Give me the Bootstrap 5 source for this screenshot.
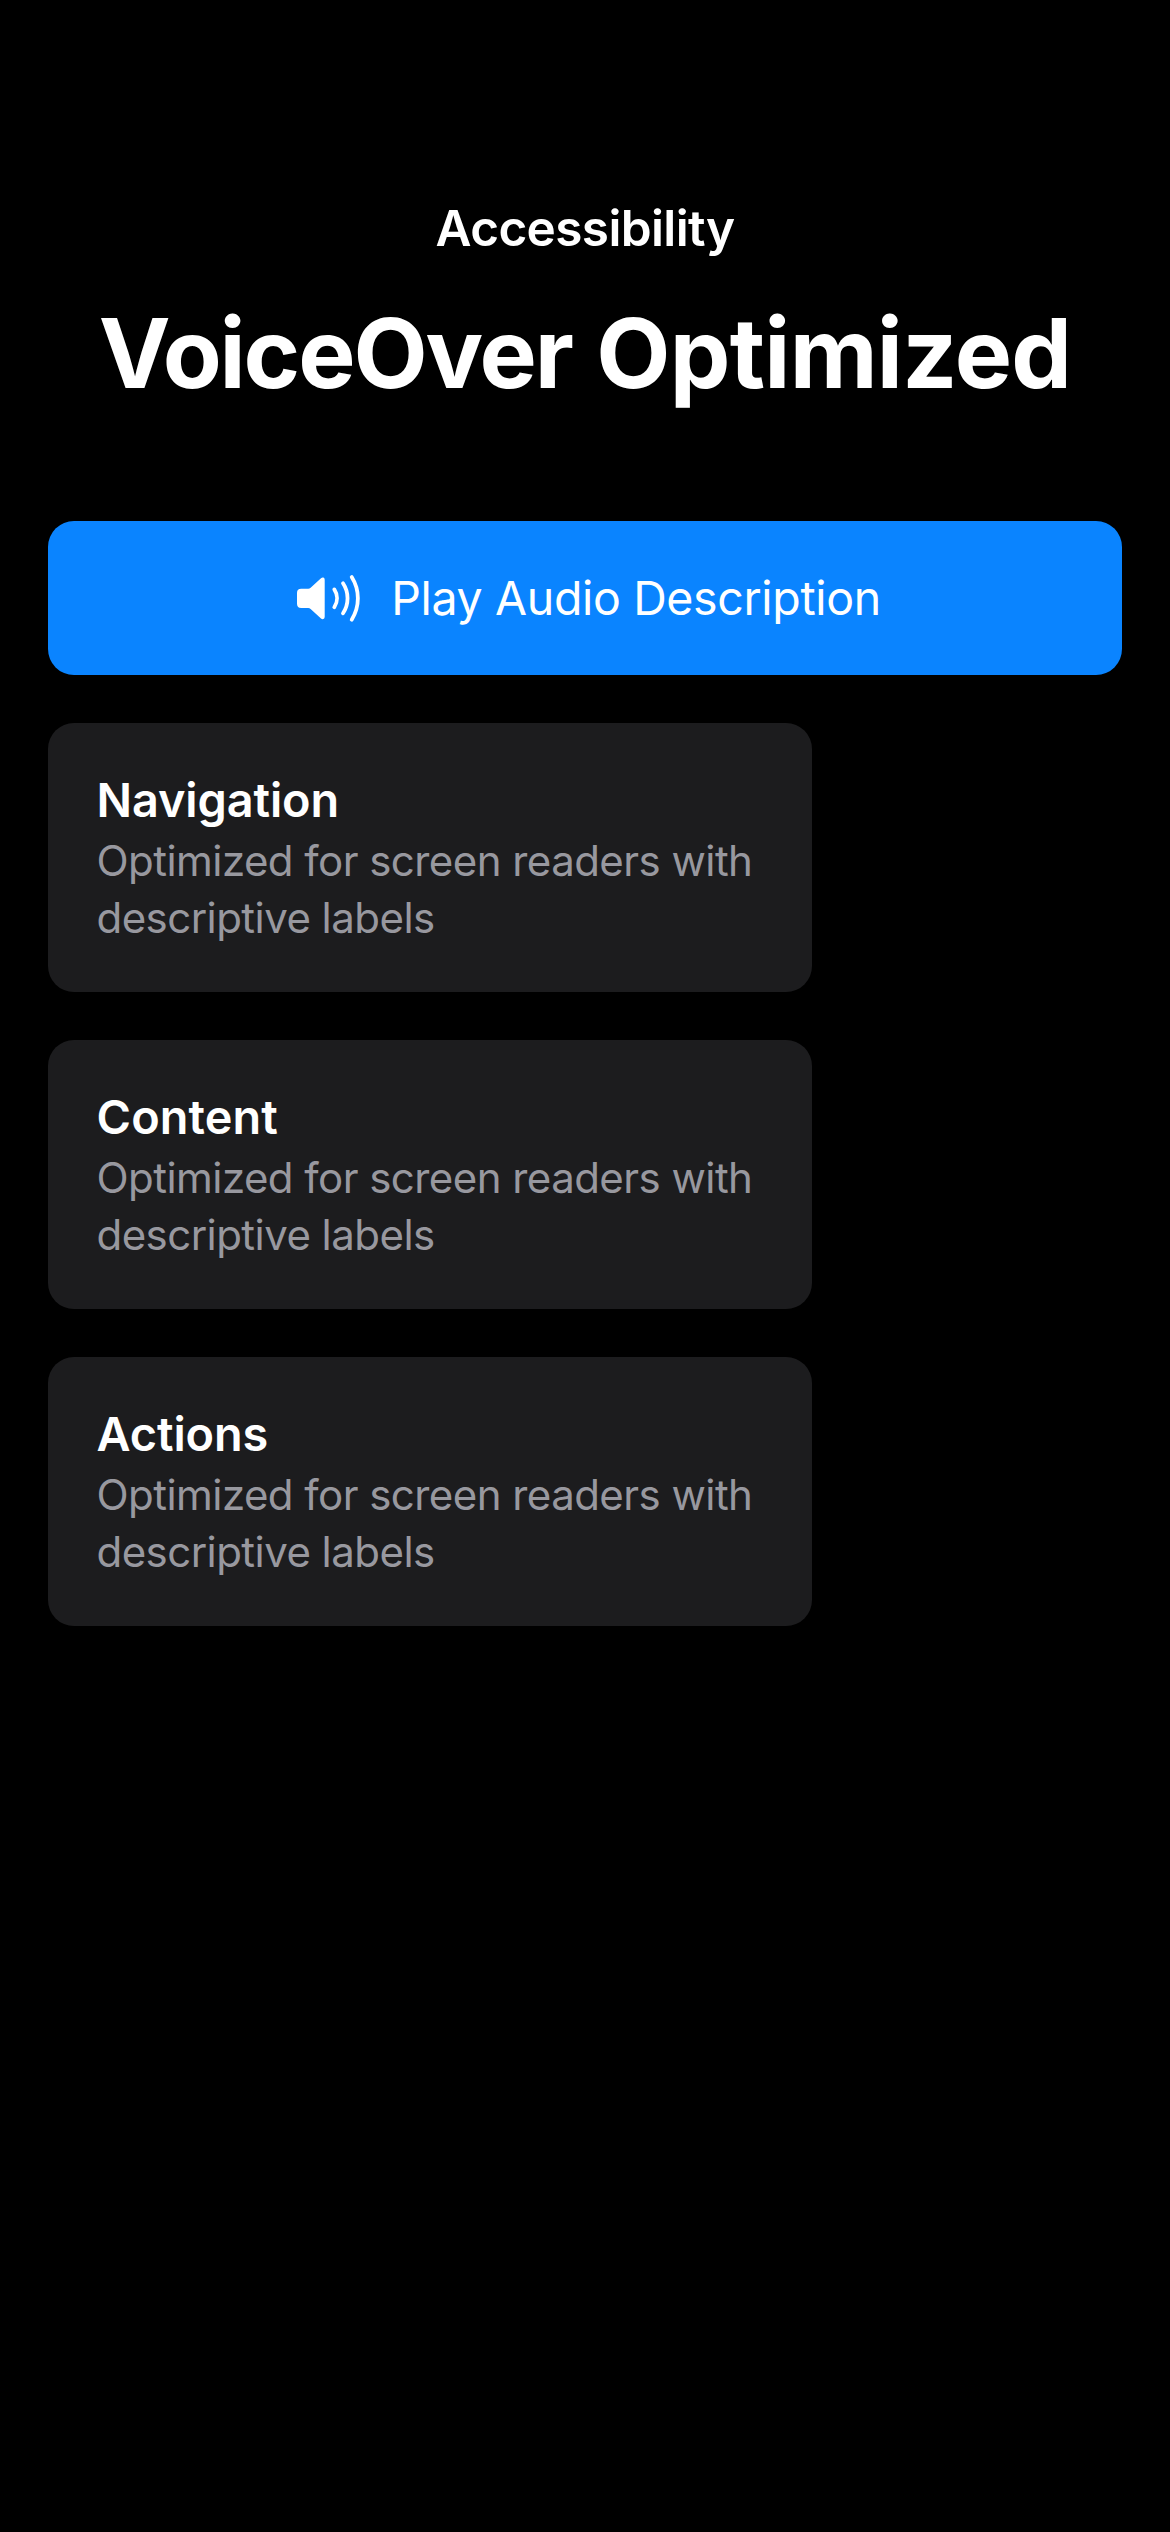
<!DOCTYPE html>
<html lang="en" data-bs-theme="dark">
<head>
<meta charset="utf-8">
<meta name="viewport" content="width=device-width, initial-scale=1">
<title>Accessibility</title>
<link href="https://cdn.jsdelivr.net/npm/bootstrap@5.3.0/dist/css/bootstrap.min.css" rel="stylesheet">
<style>
  body { background: #000; color: #fff; font-family: Inter, "Liberation Sans", sans-serif; }
  .screen { min-height: 2532px; padding: 198px 48px 0; }
  .eyebrow { font-size: 49.5px; line-height: 60px; letter-spacing: -.62px; margin-bottom: 37px; }
  .headline { font-size: 96.3px; line-height: 116px; gap: 24.5px; margin-bottom: 110px; }
  .word-a { letter-spacing: -2.1px; }
  .word-b { letter-spacing: -.73px; }
  .play-btn {
    --bs-btn-color: #fff; --bs-btn-bg: #0a84ff; --bs-btn-border-color: transparent;
    --bs-btn-hover-bg: #0a84ff; --bs-btn-hover-color: #fff;
    --bs-btn-border-width: 0; --bs-btn-border-radius: 26px;
    --bs-btn-font-size: 46.5px; --bs-btn-line-height: 58px;
    height: 154px; gap: 30px; letter-spacing: -.356px; white-space: nowrap;
  }
  .stack { gap: 48px; margin-top: 48px; }
  .info-card {
    --bs-card-bg: #1c1c1e; --bs-card-border-width: 0; --bs-card-border-radius: 26px;
    width: 764px; height: 269px;
  }
  .info-card .card-body { padding: 48px 48px 44px 48.5px; }
  .info-card .card-title { color: #fff; font-size: 46.8px; line-height: 58px; letter-spacing: -.08px; margin-bottom: 3px; }
  .info-card .title-loose { letter-spacing: .15px; }
  .info-card .card-text { color: #98989f; font-size: 42px; line-height: 57px; letter-spacing: -.55px; }
</style>
</head>
<body>
<main class="screen d-flex flex-column">
  <header class="text-center">
    <p class="eyebrow fw-semibold">Accessibility</p>
    <h1 class="headline fw-bold d-flex justify-content-center"><span class="word-a">VoiceOver</span> <span class="word-b">Optimized</span></h1>
  </header>
  <button type="button" class="btn play-btn w-100 d-flex align-items-center justify-content-center p-0">
    <svg width="72" height="54" viewBox="0 0 72 54" fill="none" stroke="#fff" stroke-width="3.8" stroke-linecap="round" aria-hidden="true">
      <path fill="#fff" stroke="none" d="M12.2 17.7H19.2Q20.6 17.7 21.6 16.8L32 7.2Q33.2 6.2 34.4 6.6Q35.7 7.1 35.7 8.8V45.8Q35.7 47.5 34.4 48Q33.2 48.5 32 47.4L21.6 37.9Q20.6 37 19.2 37H12.2Q8 37 8 32.8V21.9Q8 17.7 12.2 17.7Z"/>
      <path d="M45.3 18.4A16 16 0 0 1 45.3 36.2M54 12.3A27 27 0 0 1 54 42.3M62.7 6A40 40 0 0 1 62.7 48.7"/>
    </svg>
    <span>Play Audio Description</span>
  </button>
  <section class="stack d-flex flex-column">
    <article class="card info-card">
      <div class="card-body">
        <h2 class="card-title fw-semibold">Navigation</h2>
        <p class="card-text">Optimized for screen readers with descriptive labels</p>
      </div>
    </article>
    <article class="card info-card">
      <div class="card-body">
        <h2 class="card-title title-loose fw-semibold">Content</h2>
        <p class="card-text">Optimized for screen readers with descriptive labels</p>
      </div>
    </article>
    <article class="card info-card">
      <div class="card-body">
        <h2 class="card-title fw-semibold">Actions</h2>
        <p class="card-text">Optimized for screen readers with descriptive labels</p>
      </div>
    </article>
  </section>
</main>
<script src="https://cdn.jsdelivr.net/npm/bootstrap@5.3.0/dist/js/bootstrap.bundle.min.js"></script>
</body>
</html>
